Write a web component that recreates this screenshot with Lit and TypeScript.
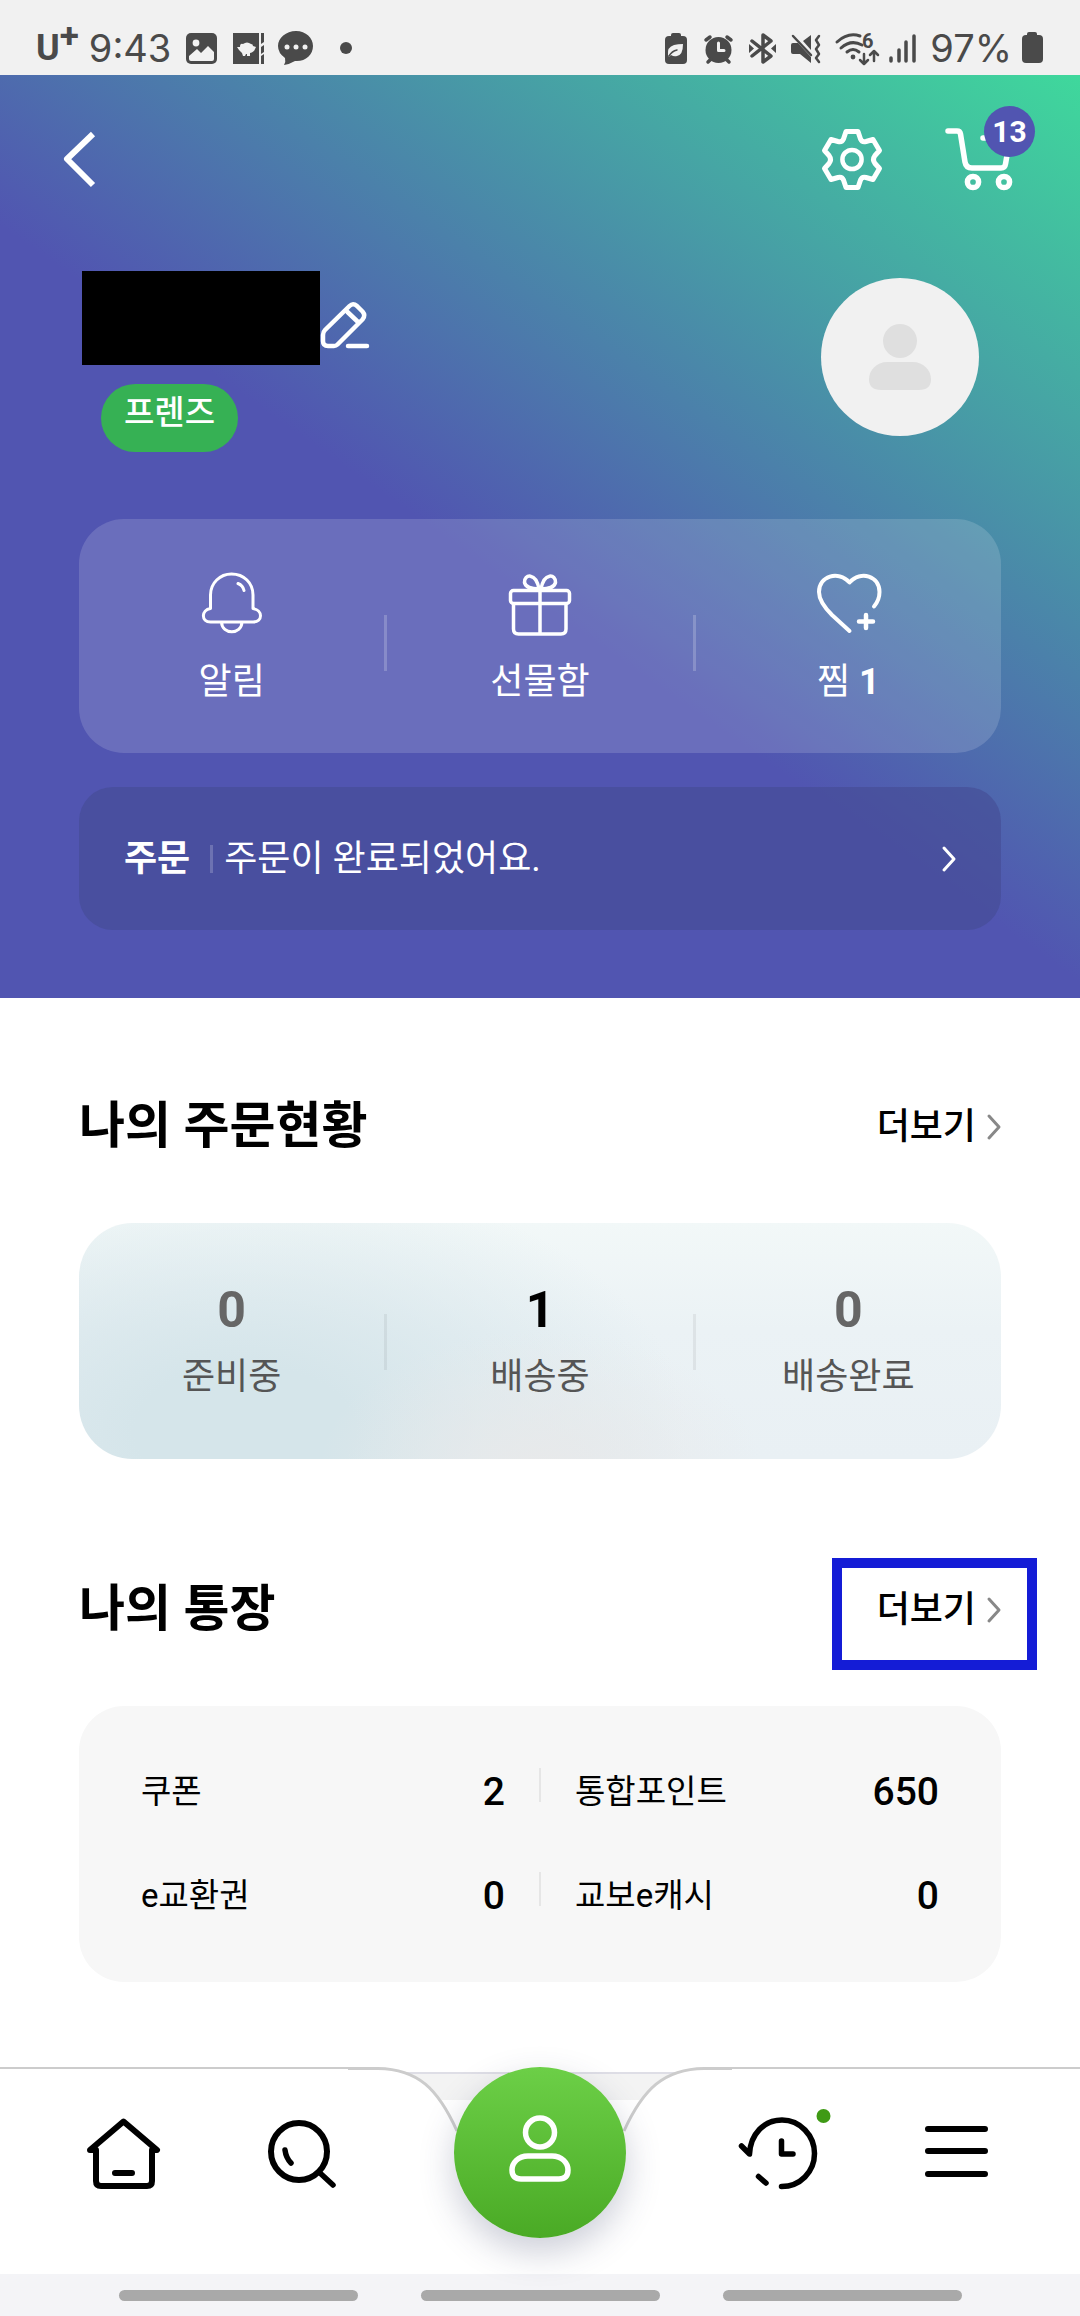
import { LitElement, html, css, svg } from "lit";
import { customElement, property } from "lit/decorators.js";

const reset = css`
  :host {
    display: block;
    font-family: Roboto, "Noto Sans CJK KR", sans-serif;
    color: #000;
  }
  *,
  *::before,
  *::after {
    box-sizing: border-box;
  }
  a {
    color: inherit;
    text-decoration: none;
  }
  button {
    padding: 0;
    border: 0;
    background: none;
    color: inherit;
    font: inherit;
  }
  svg {
    display: block;
    flex: none;
    overflow: visible;
  }
  ul,
  dl,
  dd,
  h2 {
    margin: 0;
    padding: 0;
    list-style: none;
  }
  .line {
    fill: none;
    stroke: currentColor;
    stroke-linecap: round;
    stroke-linejoin: round;
  }
`;

const chevron = svg`<path d="M2 2 L12 13 L2 24"></path>`;

@customElement("status-bar")
class StatusBar extends LitElement {
  static styles = [
    reset,
    css`
      .bar {
        display: flex;
        justify-content: space-between;
        align-items: center;
        padding: 26px 36px 5px;
        background: #f1f1f1;
        color: #4a4a4a;
        line-height: 44px;
        white-space: nowrap;
      }
      .group {
        display: flex;
        align-items: center;
        gap: 8px;
      }
      .text {
        font-family: Inter, Roboto, sans-serif;
        font-size: 38px;
      }
      .carrier {
        display: flex;
        margin-right: 2px;
        font-size: 36px;
        font-weight: 700;
      }
      .carrier sup {
        font-size: 35px;
        line-height: 22px;
      }
      .first {
        margin-left: 3px;
      }
      .dot {
        width: 12px;
        height: 12px;
        margin-left: 16px;
        border-radius: 50%;
        background: currentColor;
      }
      .solid {
        fill: currentColor;
      }
      .hole {
        fill: #f1f1f1;
      }
      .cut {
        fill: none;
        stroke: #f1f1f1;
        stroke-linecap: round;
        stroke-linejoin: round;
      }
      .six {
        font-size: 20px;
        font-weight: 700;
      }
    `,
  ];

  render() {
    return html`
      <div class="bar">
        <div class="group">
          <span class="carrier">U<sup>+</sup></span>
          <span class="text">9:43</span>
          <svg class="first" width="40" height="36" viewBox="-4 0 40 36" aria-hidden="true">
            <rect class="solid" x="0" y="3" width="31" height="31" rx="5"></rect>
            <circle class="hole" cx="10" cy="13" r="3.4"></circle>
            <path class="hole" d="M3 26 L11 19 L15 23 L22 16 L28 22 V29 Q28 31 26 31 H5 Q3 31 3 29 Z"></path>
            <path class="solid" d="M4 27 L11 22 L15 26 L22 19 L27 24 V28 Q27 30 25 30 H6 Q4 30 4 28 Z" opacity="0"></path>
          </svg>
          <svg width="38" height="36" viewBox="-2 0 38 36" aria-hidden="true">
            <path
              class="solid"
              d="M1 3 H27 V34 H1 Z M29 3 H32 V12 L29 14 Z M29 17 L32 15 V22 L29 24 Z M29 26 L32 24 V34 H29 Z"
            ></path>
            <path
              class="hole"
              d="M5 17 L8 17 Q8 13 11 14 Q15 11 19 14 Q21 14 21 16 L24 17 L23 19 Q22 22 18 23 L18 26 H15 V24 H14 L13 26 H11 L10 23 L7 20 Z"
            ></path>
          </svg>
          <svg width="40" height="36" viewBox="-2 0 40 36" aria-hidden="true">
            <path
              class="solid"
              d="M18 1 C28 1 35 8 35 16 C35 25 27 32 17 31 Q12 34 6 35 Q8 32 7 28 Q0 23 0 16 C0 8 8 1 18 1 Z"
            ></path>
            <circle class="hole" cx="9" cy="17" r="2.5"></circle>
            <circle class="hole" cx="18" cy="17" r="2.5"></circle>
            <circle class="hole" cx="27" cy="17" r="2.5"></circle>
          </svg>
          <span class="dot"></span>
        </div>
        <div class="group">
          <svg width="32" height="36" aria-hidden="true">
            <rect class="solid" x="9" y="3" width="10" height="6" rx="2"></rect>
            <rect class="solid" x="3" y="6" width="22" height="28" rx="4"></rect>
            <path class="hole" d="M6 25 Q5 17 12 15 Q16 14 21 14 Q21 25 15 26 Q12 27 9 25 L7 27 Z"></path>
            <path class="line" stroke-width="1.5" d="M7 26 Q10 21 15 20"></path>
          </svg>
          <svg width="36" height="36" aria-hidden="true">
            <circle class="solid" cx="16.5" cy="20" r="13"></circle>
            <path class="line" stroke-width="3.5" d="M4 10 L8 7 M25 7 L29 10 M6 32 L9 29 M24 29 L27 32"></path>
            <path class="cut" stroke-width="3" d="M16.5 13 V20.500 H22"></path>
          </svg>
          <svg width="36" height="36" aria-hidden="true">
            <path class="line" stroke-width="3.500" d="M6 11 L25 26 L17 32 V5 L25 11 L6 26"></path>
            <path class="solid" d="M3 14 L8 18.500 L3 23 Z M30 14 L25 18.500 L30 23 Z"></path>
          </svg>
          <svg width="36" height="36" aria-hidden="true">
            <path class="solid" d="M13 11 L21 5 V20 Z M3 13 H8 L21 27 V33 L10 24 H3 Q1 24 1 22 V15 Q1 13 3 13 Z"></path>
            <path
              class="line"
              stroke-width="2.5"
              d="M3 6 L21 25 M29 6 L26 10 L29 15 L26 19 L29 24 L26 28 L29 32"
            ></path>
          </svg>
          <svg width="48" height="36" aria-hidden="true">
            <path class="line" stroke-width="3" d="M3 12 Q14 2 26 6 M7 18 Q17 9 28 15 M13 22 Q19 17 25 22"></path>
            <circle class="solid" cx="19" cy="27" r="2.4"></circle>
            <text class="solid six" x="28" y="18">6</text>
            <path
              class="line"
              stroke-width="2.5"
              d="M30 24 V33 M26 30 L30 34 L34 30 M40 31 V21 M36 25 L40 21 L44 25"
            ></path>
          </svg>
          <svg width="32" height="36" aria-hidden="true">
            <path class="line" stroke-width="3.500" d="M1 28 V31 M9 20 V31 M16 12 V31 M24 6 V31"></path>
          </svg>
          <span class="text">97%</span>
          <svg width="24" height="36" aria-hidden="true">
            <rect class="solid" x="7" y="2" width="10" height="6" rx="2"></rect>
            <rect class="solid" x="2" y="5" width="21" height="28" rx="4"></rect>
          </svg>
        </div>
      </div>
    `;
  }
}

@customElement("profile-header")
class ProfileHeader extends LitElement {
  static styles = [
    reset,
    css`
      .header {
        padding: 48px 79px 68px;
        background: linear-gradient(35deg, #5155b1 46%, #3fd89c 100%);
        color: #fff;
      }
      .toolbar {
        display: flex;
        align-items: center;
        gap: 56px;
        margin: 0 -15px 76px -37px;
      }
      .back {
        margin-right: auto;
      }
      .back .line {
        stroke-linecap: butt;
      }
      .cart {
        position: relative;
      }
      .badge {
        position: absolute;
        top: -17px;
        left: 40px;
        width: 51px;
        height: 51px;
        border-radius: 50%;
        background: #5155b1;
        font-size: 30px;
        font-weight: 700;
        line-height: 51px;
        text-align: center;
      }
      .profile {
        display: flex;
        justify-content: space-between;
        align-items: flex-start;
        padding: 0 22px 0 3px;
        margin-bottom: 67px;
      }
      .name {
        display: flex;
        align-items: center;
        margin-bottom: 19px;
      }
      .mask {
        width: 238px;
        height: 94px;
        background: #000;
      }
      .grade {
        display: inline-block;
        height: 68px;
        margin-left: 19px;
        padding: 0 23px;
        border-radius: 34px;
        background: #36b154;
        font-size: 33px;
        font-weight: 500;
        line-height: 58px;
      }
      .avatar {
        display: grid;
        place-items: center;
        width: 158px;
        height: 158px;
        margin-top: 7px;
        border-radius: 50%;
        background: #f1f1f1;
        color: #dfdfdf;
      }
      .quick {
        display: grid;
        grid-template-columns: 1fr 3px 1fr 3px 1fr;
        align-items: center;
        margin-bottom: 34px;
        padding: 48px 0 34px;
        border-radius: 45px;
        background: rgba(255, 255, 255, 0.15);
      }
      .divider {
        height: 56px;
        background: rgba(255, 255, 255, 0.2);
      }
      .item {
        display: flex;
        flex-direction: column;
        align-items: center;
        gap: 16px;
        padding-bottom: 10px;
        font-size: 36px;
        line-height: 54px;
      }
      .item b {
        font-weight: 700;
      }
      .notice {
        display: flex;
        align-items: center;
        padding: 45px 45px 44px;
        border-radius: 34px;
        background: rgba(69, 75, 147, 0.6);
        font-size: 36px;
        line-height: 54px;
      }
      .notice b {
        font-weight: 700;
      }
      .bar {
        width: 3px;
        height: 28px;
        margin: 0 11px 0 20px;
        background: rgba(255, 255, 255, 0.2);
      }
      .message {
        flex: 1;
      }
    `,
  ];

  render() {
    return html`
      <header class="header">
        <div class="toolbar">
          <button class="back" aria-label="뒤로">
            <svg width="72" height="72">
              <path class="line" stroke-width="6" d="M51 11 L25 36 L51 62"></path>
            </svg>
          </button>
          <button aria-label="설정">
            <svg width="72" height="72">
              <path
                class="line"
                stroke-width="5"
                d="M30 8.500 H42 L44.500 16 Q46 19.500 50 18.500 L57 16.500 L63.500 27.500 L59 32.500 Q56 36.500 59 40.500 L63.500 45.500 L57 56.500 L50 54.500 Q46 53.500 44.500 57 L42 64.500 H30 L27.500 57 Q26 53.500 22 54.500 L15 56.500 L8.500 45.500 L13 40.500 Q16 36.500 13 32.500 L8.500 27.500 L15 16.500 L22 18.500 Q26 19.500 27.500 16 Z"
              ></path>
              <circle class="line" stroke-width="4.5" cx="36" cy="36.500" r="9.600"></circle>
            </svg>
          </button>
          <a class="cart" href="#cart" aria-label="장바구니">
            <svg width="72" height="72">
              <path
                class="line"
                stroke-width="5.5"
                d="M4 8 H13 Q16 8 16.500 11 L21 39 Q22 45 28 45 H57 Q61 45 61.500 41 L66 15 H39"
              ></path>
              <circle class="line" stroke-width="5.5" cx="29" cy="59" r="5.600"></circle>
              <circle class="line" stroke-width="5.5" cx="60" cy="59" r="5.600"></circle>
            </svg>
            <span class="badge">13</span>
          </a>
        </div>

        <div class="profile">
          <div>
            <div class="name">
              <span class="mask"></span>
              <button aria-label="이름 수정">
                <svg width="60" height="60" viewBox="2 -9 60 60">
                  <path
                    class="line"
                    stroke-width="4.500"
                    d="M5 38 Q5 35 7 33 L31.500 9 Q35 5.500 39 9 L44.500 14.500 Q48 18.500 44.500 22.500 L19.500 47.500 Q18 49 16 49 H10 Q5 49 5 44 Z M29.500 15 L39.500 24.500 M30 49 H49"
                  ></path>
                </svg>
              </button>
            </div>
            <span class="grade">프렌즈</span>
          </div>
          <span class="avatar">
            <svg width="62" height="66" fill="currentColor" aria-hidden="true">
              <circle cx="31" cy="17" r="17"></circle>
              <path d="M18 38 H44 C54 38 62 46 62 55 Q62 66 50 66 H12 Q0 66 0 55 C0 46 8 38 18 38 Z"></path>
            </svg>
          </span>
        </div>

        <nav class="quick">
          <a class="item" href="#alerts">
            <svg width="72" height="72" aria-hidden="true">
              <path
                class="line"
                stroke-width="3"
                d="M14.500 41.500 V28 C14.500 16 24 7 35.500 7 C48 7 57 16 57 28 V41.500 C67 43 67 55 57 55 H14.500 C5 55 5 43 14.500 41.500 Z M25.500 55 C26 68 45.500 68 46 55 M42 16.500 Q47 18.500 48 23.500"
              ></path>
            </svg>
            <span>알림</span>
          </a>
          <span class="divider"></span>
          <a class="item" href="#gifts">
            <svg width="72" height="72" aria-hidden="true">
              <rect class="line" stroke-width="3.500" x="6.500" y="23.500" width="59" height="13" rx="3"></rect>
              <path
                class="line"
                stroke-width="3.500"
                d="M9.500 37 V62 Q9.500 67 14.500 67 H57 Q62 67 62 62 V37 M36 23 V66 M35 22 C32 5 20 7 20.500 15.500 Q22 22 35 22 M37 22 C40 5 52 7 51.500 15.500 Q50 22 37 22"
              ></path>
            </svg>
            <span>선물함</span>
          </a>
          <span class="divider"></span>
          <a class="item" href="#wishes">
            <svg width="72" height="72" aria-hidden="true">
              <path
                class="line"
                stroke-width="4"
                d="M37.500 64 L20 48 Q7 35 7 25 C7 9 26 3 37.500 15.500 C49 3 67.500 9 67.500 25 Q67.500 33 62 39.500"
              ></path>
              <path class="line" stroke-width="4.500" d="M54 48 V61 M47 54.500 H61"></path>
            </svg>
            <span>찜 <b>1</b></span>
          </a>
        </nav>

        <a class="notice" href="#order">
          <b>주문</b>
          <span class="bar"></span>
          <span class="message">주문이 완료되었어요.</span>
          <svg class="line" width="14" height="26" stroke-width="3">${chevron}</svg>
        </a>
      </header>
    `;
  }
}

@customElement("section-title")
class SectionTitle extends LitElement {
  @property() heading = "";
  @property({ type: Boolean }) marked = false;

  static styles = [
    reset,
    css`
      .row {
        display: flex;
        justify-content: space-between;
        align-items: center;
        line-height: 72px;
      }
      h2 {
        font-size: 50px;
        font-weight: 700;
      }
      .more {
        position: relative;
        display: flex;
        align-items: center;
        gap: 11px;
        padding-top: 2px;
        font-size: 36px;
        font-weight: 500;
      }
      .more svg {
        color: #888;
      }
      .marked::after {
        content: "";
        position: absolute;
        inset: -14px -36px -24px -45px;
        border: 10px solid #141cd6;
      }
    `,
  ];

  render() {
    return html`
      <div class="row">
        <h2>${this.heading}</h2>
        <a class="more ${this.marked ? "marked" : ""}" href="#more">
          더보기
          <svg class="line" width="14" height="26" stroke-width="3">${chevron}</svg>
        </a>
      </div>
    `;
  }
}

@customElement("order-status")
class OrderStatus extends LitElement {
  static styles = [
    reset,
    css`
      .card {
        display: grid;
        grid-template-columns: 1fr 3px 1fr 3px 1fr;
        align-items: center;
        padding: 57px 0 55px;
        border-radius: 54px;
        background:
          radial-gradient(ellipse 24% 60% at 50% 105%, #e8e9ea, rgba(232, 233, 234, 0)),
          radial-gradient(ellipse 48% 110% at 18% 88%, #d5e5ea 25%, rgba(213, 229, 234, 0) 100%),
          linear-gradient(to bottom, #f2f8f8, #ebf2f5 45%, #e9f0f4);
      }
      .divider {
        height: 56px;
        background: rgba(0, 0, 0, 0.06);
      }
      .item {
        display: flex;
        flex-direction: column;
        align-items: center;
        gap: 10px;
        color: #555;
        font-size: 36px;
        line-height: 54px;
      }
      .count {
        color: #666;
        font-size: 50px;
        font-weight: 700;
        line-height: 60px;
      }
      .active {
        color: #000;
      }
    `,
  ];

  private steps = [
    { label: "준비중", count: 0 },
    { label: "배송중", count: 1 },
    { label: "배송완료", count: 0 },
  ];

  render() {
    return html`
      <div class="card">
        ${this.steps.map(
          (step, i) => html`
            ${i ? html`<span class="divider"></span>` : null}
            <a class="item" href="#orders">
              <span class="count ${step.count ? "active" : ""}">${step.count}</span>
              <span>${step.label}</span>
            </a>
          `
        )}
      </div>
    `;
  }
}

@customElement("account-summary")
class AccountSummary extends LitElement {
  static styles = [
    reset,
    css`
      .card {
        display: grid;
        grid-template-columns: 1fr 2px 1fr;
        gap: 50px 34px;
        padding: 59px 62px;
        border-radius: 45px;
        background: #f7f7f7;
        line-height: 54px;
      }
      .entry {
        display: flex;
        justify-content: space-between;
      }
      dt {
        font-size: 33px;
      }
      dd {
        font-size: 39px;
        font-weight: 500;
      }
      .divider {
        height: 34px;
        margin-top: 3px;
        background: #e6e6e6;
      }
    `,
  ];

  private entries = [
    ["쿠폰", "2"],
    ["통합포인트", "650"],
    ["e교환권", "0"],
    ["교보e캐시", "0"],
  ];

  render() {
    return html`
      <dl class="card">
        ${this.entries.map(
          ([label, value], i) => html`
            ${i % 2 ? html`<div class="divider"></div>` : null}
            <div class="entry">
              <dt>${label}</dt>
              <dd>${value}</dd>
            </div>
          `
        )}
      </dl>
    `;
  }
}

@customElement("bottom-nav")
class BottomNav extends LitElement {
  static styles = [
    reset,
    css`
      .nav {
        position: relative;
        display: grid;
        grid-template-columns: 11fr 11fr 19fr 11fr 11fr;
        justify-items: center;
        padding: 0 36px 36px;
        background: #fff;
      }
      .nav::before {
        content: "";
        position: absolute;
        inset: 0 0 auto;
        height: 2px;
        background: #ccc;
      }
      .notch {
        position: absolute;
        top: 0;
        left: 50%;
        margin-left: -192px;
        background: #fff;
      }
      .edge {
        fill: none;
        stroke: #ccc;
        stroke-width: 3;
      }
      .tab {
        padding-top: 46px;
      }
      .me {
        position: relative;
        display: grid;
        place-items: center;
        width: 172px;
        height: 171px;
        padding-bottom: 8px;
        border-radius: 50%;
        background: linear-gradient(#6ccf47, #4aaa25);
        box-shadow: 0 14px 34px rgba(50, 60, 100, 0.25);
        color: #fff;
      }
      .new {
        fill: #3f9a15;
      }
      .system {
        display: flex;
        justify-content: center;
        gap: 63px;
        padding: 16px 0 15px;
        background: #f4f4f7;
      }
      .pill {
        width: 239px;
        height: 11px;
        border-radius: 6px;
        background: #a9a9a9;
      }
    `,
  ];

  render() {
    return html`
      <nav class="nav">
        <svg class="notch" width="384" height="66" aria-hidden="true">
          <path fill="#f3f3f3" d="M50 6 H336 L296 33 H92 Z"></path>
          <path fill="#dedee6" d="M50 5 H336 V7 H50 Z"></path>
          <path
            fill="#fff"
            d="M0 2 H30 C70 2 90 22 109 64 V66 H0 Z M384 2 H356 C316 2 295 22 276 64 V66 H384 Z"
          ></path>
          <path class="edge" d="M0 1.500 H30 C70 2 90 22 109 64 M384 1.500 H356 C316 2 295 22 276 64"></path>
        </svg>
        <a class="tab" href="#home" aria-label="홈">
          <svg width="80" height="80">
            <path
              class="line"
              stroke-width="6"
              d="M6 37 L39.500 8.500 L73 37 H68 V68 Q68 73 63 73 H17 Q12 73 12 68 V37 Z M31 60 H48"
            ></path>
          </svg>
        </a>
        <a class="tab" href="#search" aria-label="검색">
          <svg width="80" height="80">
            <ellipse class="line" stroke-width="6" cx="39" cy="38.500" rx="28" ry="28.500"></ellipse>
            <path class="line" stroke-width="5.500" d="M60 60 L73 72 M25 37 Q26 45 31 50"></path>
          </svg>
        </a>
        <a class="me" href="#my" aria-label="마이">
          <svg width="62" height="68">
            <circle class="line" stroke-width="5.500" cx="31" cy="17.500" r="14.500"></circle>
            <path
              class="line"
              stroke-width="5.500"
              d="M19 41 H43 C53 41 59 48 59 55 Q59 64 50 64 H12 Q3 64 3 55 C3 48 9 41 19 41 Z"
            ></path>
          </svg>
        </a>
        <a class="tab" href="#recent" aria-label="최근 본 상품">
          <svg width="80" height="80">
            <path
              class="line"
              stroke-width="5.500"
              d="M41.500 73.500 C60 73.500 74.500 59 74.500 40.500 C74.500 22.500 60 7 42 7 C24 7 10.500 21 9.500 41 L1.500 33 M18.500 63.500 L26 70 M41.500 28 V41 H53"
            ></path>
            <circle class="new" cx="83.500" cy="3" r="7"></circle>
          </svg>
        </a>
        <a class="tab" href="#menu" aria-label="전체 메뉴">
          <svg width="80" height="80">
            <path class="line" stroke-width="6" d="M12 16 H69 M12 38 H69 M12 61 H69"></path>
          </svg>
        </a>
      </nav>
      <div class="system">
        <span class="pill"></span>
        <span class="pill"></span>
        <span class="pill"></span>
      </div>
    `;
  }
}

@customElement("app-root")
class AppRoot extends LitElement {
  static styles = [
    reset,
    css`
      .page {
        display: flex;
        flex-direction: column;
        min-height: 100vh;
        background: #fff;
      }
      .content {
        flex: 1;
        display: flex;
        flex-direction: column;
        gap: 113px;
        padding: 91px 79px 85px;
      }
      .section {
        display: flex;
        flex-direction: column;
        gap: 60px;
      }
    `,
  ];

  render() {
    return html`
      <div class="page">
        <status-bar></status-bar>
        <profile-header></profile-header>
        <main class="content">
          <section class="section">
            <section-title heading="나의 주문현황"></section-title>
            <order-status></order-status>
          </section>
          <section class="section">
            <section-title heading="나의 통장" marked></section-title>
            <account-summary></account-summary>
          </section>
        </main>
        <bottom-nav></bottom-nav>
      </div>
    `;
  }
}
